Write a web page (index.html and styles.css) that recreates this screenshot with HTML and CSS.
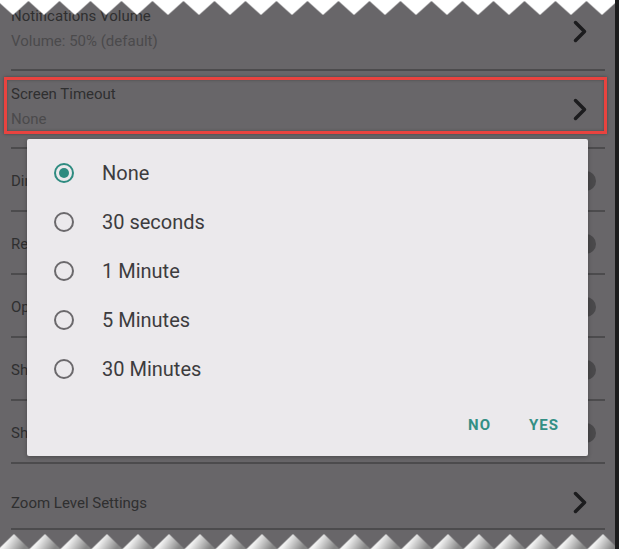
FILE: index.html
```html
<!DOCTYPE html>
<html lang="en">
<head>
    <meta charset="UTF-8">
    <meta name="viewport" content="width=device-width, initial-scale=1.0">
    <title>Screen Timeout</title>
    <link rel="stylesheet" href="styles.css">
</head>
<body>
    <div class="screen">
        <div class="settings">
            <div class="row row-double">
                <div class="row-text">
                    <div class="row-title">Notifications Volume</div>
                    <div class="row-sub">Volume: 50% (default)</div>
                </div>
                <svg class="chevron" viewBox="0 0 14 23"><path d="M2.5 2.5 L11.5 11.5 L2.5 20.5"/></svg>
            </div>
            <div class="row row-double row-marked">
                <div class="row-text">
                    <div class="row-title">Screen Timeout</div>
                    <div class="row-sub">None</div>
                </div>
                <svg class="chevron" viewBox="0 0 14 23"><path d="M2.5 2.5 L11.5 11.5 L2.5 20.5"/></svg>
                <!-- annotation box drawn over the row -->
                <div class="mark"></div>
            </div>
            <div class="row row-switch">
                <div class="row-title">Dim Screen</div>
                <span class="switch"></span>
            </div>
            <div class="row row-switch">
                <div class="row-title">Remember</div>
                <span class="switch"></span>
            </div>
            <div class="row row-switch">
                <div class="row-title">Open Last</div>
                <span class="switch"></span>
            </div>
            <div class="row row-switch">
                <div class="row-title">Show Hints</div>
                <span class="switch"></span>
            </div>
            <div class="row row-switch">
                <div class="row-title">Shuffle</div>
                <span class="switch"></span>
            </div>
            <div class="row row-nav">
                <div class="row-title">Zoom Level Settings</div>
                <svg class="chevron" viewBox="0 0 14 23"><path d="M2.5 2.5 L11.5 11.5 L2.5 20.5"/></svg>
            </div>
        </div>

        <!-- Timeout picker dialog -->
        <div class="dialog">
            <ul class="options">
                <li class="option checked"><span class="radio"></span>None</li>
                <li class="option"><span class="radio"></span>30 seconds</li>
                <li class="option"><span class="radio"></span>1 Minute</li>
                <li class="option"><span class="radio"></span>5 Minutes</li>
                <li class="option"><span class="radio"></span>30 Minutes</li>
            </ul>
            <div class="actions">
                <button class="action">NO</button>
                <button class="action">YES</button>
            </div>
        </div>

        <!-- torn paper edges -->
        <svg class="edge edge-top" width="619" height="16">
            <defs>
                <pattern id="teeth-top" x="-2.5" y="0" width="31" height="16" patternUnits="userSpaceOnUse">
                    <polygon points="0,0 31,0 31,1 15.5,15 0,1" fill="#ffffff"/>
                </pattern>
            </defs>
            <rect width="619" height="16" fill="url(#teeth-top)"/>
        </svg>
        <svg class="edge edge-bottom" width="619" height="15">
            <defs>
                <linearGradient id="tooth-shade" x1="0" y1="0" x2="1" y2="0.3">
                    <stop offset="0" stop-color="#ffffff"/>
                    <stop offset="0.4" stop-color="#f0f0f0"/>
                    <stop offset="1" stop-color="#878787"/>
                </linearGradient>
                <pattern id="teeth-bottom" x="-1.5" y="0" width="31" height="15" patternUnits="userSpaceOnUse">
                    <polygon points="0,15 15.5,0 31,15" fill="url(#tooth-shade)"/>
                </pattern>
            </defs>
            <rect width="619" height="15" fill="url(#teeth-bottom)"/>
        </svg>
    </div>
</body>
</html>
```

FILE: styles.css
```css
body {
    margin: 0;
    background: #ffffff;
    font-family: Roboto, 'Liberation Sans', sans-serif;
}
.screen {
    position: relative;
    width: 615px;
    height: 549px;
    background-color: #686669;
    border-right: 4px solid #1c1c1d;
    overflow: hidden;
}
/* Settings list (dimmed behind the dialog) */
.settings {
    margin-top: -7px;
    padding: 0 10px 0 11px;
}
.row {
    display: flex;
    align-items: center;
    border-bottom: 2px solid #4c4b4d;
}
.row-text {
    display: flex;
    flex-direction: column;
    gap: 5px;
}
.row-title {
    font-size: 15px;
    line-height: 20px;
    color: #2f2f30;
    white-space: nowrap;
}
.row-sub {
    font-size: 15px;
    line-height: 20px;
    color: #4b4a4c;
}
.row-double {
    padding: 13px 0 18px;
}
.row-double .chevron {
    margin-top: 5px;
}
.row-marked {
    position: relative;
}
.mark {
    position: absolute;
    top: 6px;
    left: -7px;
    right: -2px;
    height: 57px;
    box-sizing: border-box;
    border: 3px solid #e8433f;
    box-shadow: 0 0 3px rgba(0, 0, 0, 0.35), inset 0 0 3px rgba(0, 0, 0, 0.3);
}
.row-switch {
    padding: 22px 0 19px;
}
.row-nav {
    padding: 27px 0 14px;
}
.chevron {
    width: 14px;
    height: 23px;
    margin-left: auto;
    margin-right: 18px;
    flex-shrink: 0;
}
.chevron path {
    fill: none;
    stroke: #1c1c1e;
    stroke-width: 3.5;
    stroke-linecap: round;
    stroke-linejoin: round;
}
.switch {
    margin-left: auto;
    margin-right: 9px;
    width: 20px;
    height: 20px;
    border-radius: 50%;
    background-color: #4a494b;
    flex-shrink: 0;
}
/* Dialog */
.dialog {
    position: absolute;
    left: 27px;
    top: 139px;
    width: 561px;
    height: 317px;
    box-sizing: border-box;
    padding-top: 9px;
    background-color: #ebe9ec;
    border-radius: 2px;
    box-shadow: 0 1px 4px rgba(0, 0, 0, 0.3);
}
.options {
    list-style: none;
    margin: 0;
    padding: 0;
}
.option {
    display: flex;
    align-items: center;
    height: 49px;
    padding-left: 27px;
    font-size: 20px;
    color: #3d3c3e;
}
.radio {
    width: 20px;
    height: 20px;
    box-sizing: border-box;
    border: 2px solid #6b696c;
    border-radius: 50%;
    margin-right: 28px;
    display: flex;
    align-items: center;
    justify-content: center;
}
.option.checked .radio {
    border-color: #2e8b80;
}
.option.checked .radio::after {
    content: '';
    width: 10px;
    height: 10px;
    border-radius: 50%;
    background-color: #2e8b80;
}
.actions {
    display: flex;
    justify-content: flex-end;
    gap: 22px;
    margin-top: 14px;
    padding-right: 21px;
}
.action {
    height: 36px;
    padding: 0 8px;
    border: none;
    background: none;
    font-family: Roboto, 'Liberation Sans', sans-serif;
    font-size: 15px;
    font-weight: 700;
    letter-spacing: 1px;
    color: #338f85;
    cursor: pointer;
}
/* Torn edges */
.edge {
    position: absolute;
    left: 0;
    display: block;
}
.edge-top {
    top: 0;
}
.edge-bottom {
    bottom: 0;
}
```
